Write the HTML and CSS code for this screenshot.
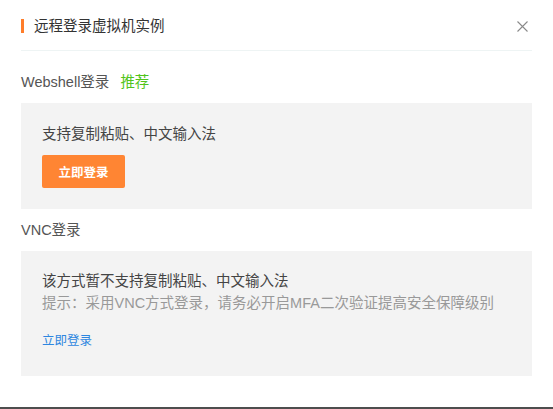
FILE: index.html
```html
<!DOCTYPE html>
<html lang="zh-CN">
<head>
  <meta charset="UTF-8">
  <title>远程登录虚拟机实例</title>
  <link rel="stylesheet" href="styles.css">
</head>
<body>
  <div class="dialog">
    <div class="header">
      <h3 class="title">远程登录虚拟机实例</h3>
      <button class="close" aria-label="关闭">
        <svg width="11" height="11" viewBox="0 0 11 11"><path d="M0.5 0.5L10.5 10.5M10.5 0.5L0.5 10.5" stroke="#8a8a8a" stroke-width="1.1" fill="none"/></svg>
      </button>
    </div>

    <div class="label">Webshell登录<span class="tag">推荐</span></div>
    <div class="panel webshell">
      <p class="desc">支持复制粘贴、中文输入法</p>
      <button class="login-btn">立即登录</button>
    </div>

    <div class="label">VNC登录</div>
    <div class="panel vnc">
      <p class="desc">该方式暂不支持复制粘贴、中文输入法</p>
      <p class="hint">提示：采用VNC方式登录，请务必开启MFA二次验证提高安全保障级别</p>
      <a class="login-link" href="#">立即登录</a>
    </div>
  </div>
  <div class="edge"></div>
</body>
</html>
```

FILE: styles.css
```css
body { margin: 0; background: #fff; font-family: "Liberation Sans", "Noto Sans CJK SC", sans-serif; color: #333; }
.dialog { height: 407px; box-sizing: border-box; padding: 0 21px; }
.header { height: 51px; padding-top: 2px; box-sizing: border-box; display: flex; align-items: center; justify-content: space-between; border-bottom: 1px solid #eef4f4; }
.title { margin: 0; font-size: 14.5px; font-weight: normal; line-height: 14px; color: #333; border-left: 3px solid #ff7d2a; padding-left: 10px; }
.close { background: none; border: none; padding: 0; margin-right: 4px; width: 11px; height: 11px; display: flex; cursor: pointer; }
.label { font-size: 14.5px; line-height: 22px; color: #555; margin: 20px 0 10px; }
.panel + .label { margin-top: 10px; }
.tag { color: #52c41a; margin-left: 11px; }
.panel { background: #f3f3f3; padding: 20px 21px 21px; }
.panel.vnc { padding: 19px 21px 25px; }
.desc { margin: 0; font-size: 14.5px; line-height: 22px; color: #444; }
.hint { margin: 0; font-size: 14.5px; line-height: 22px; color: #999; }
.login-btn { margin-top: 10px; display: block; width: 83px; height: 33px; background: #ff8533; color: #fff; border: none; border-radius: 2px; font-family: inherit; font-size: 12.5px; font-weight: bold; cursor: pointer; }
.login-link { display: block; margin-top: 17px; font-size: 12.5px; line-height: 20px; color: #2d86e0; text-decoration: none; }
.edge { height: 2px; background: #4e4e4e; }
```
